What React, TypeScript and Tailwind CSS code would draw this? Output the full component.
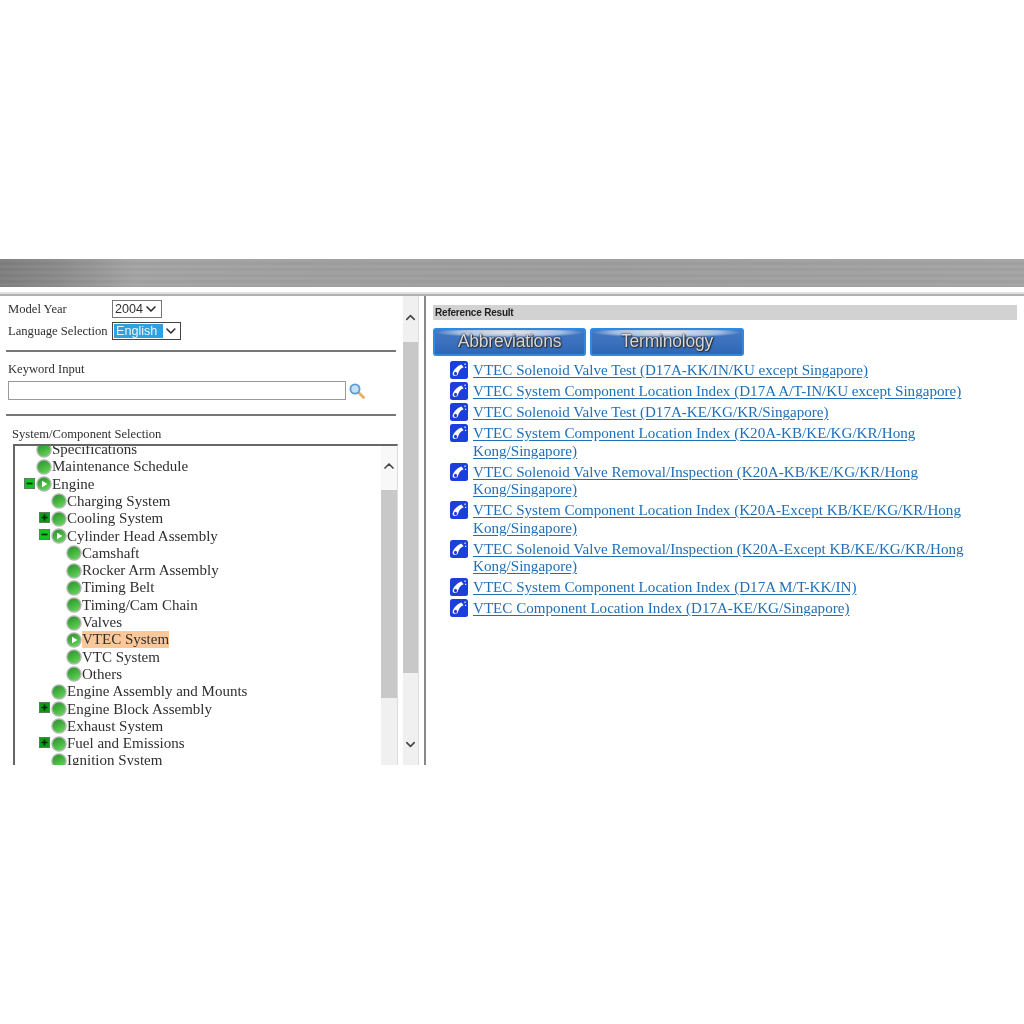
import { ChevronDown, ChevronUp } from "lucide-react";

type TreeRow = {
  label: string;
  level: number;
  toggle?: "plus" | "minus";
  open?: boolean;
  selected?: boolean;
};

const treeRows: TreeRow[] = [
  { label: "Specifications", level: 0 },
  { label: "Maintenance Schedule", level: 0 },
  { label: "Engine", level: 0, toggle: "minus", open: true },
  { label: "Charging System", level: 1 },
  { label: "Cooling System", level: 1, toggle: "plus" },
  { label: "Cylinder Head Assembly", level: 1, toggle: "minus", open: true },
  { label: "Camshaft", level: 2 },
  { label: "Rocker Arm Assembly", level: 2 },
  { label: "Timing Belt", level: 2 },
  { label: "Timing/Cam Chain", level: 2 },
  { label: "Valves", level: 2 },
  { label: "VTEC System", level: 2, open: true, selected: true },
  { label: "VTC System", level: 2 },
  { label: "Others", level: 2 },
  { label: "Engine Assembly and Mounts", level: 1 },
  { label: "Engine Block Assembly", level: 1, toggle: "plus" },
  { label: "Exhaust System", level: 1 },
  { label: "Fuel and Emissions", level: 1, toggle: "plus" },
  { label: "Ignition System", level: 1 },
];

const links: string[][] = [
  ["VTEC Solenoid Valve Test (D17A-KK/IN/KU except Singapore)"],
  ["VTEC System Component Location Index (D17A A/T-IN/KU except Singapore)"],
  ["VTEC Solenoid Valve Test (D17A-KE/KG/KR/Singapore)"],
  ["VTEC System Component Location Index (K20A-KB/KE/KG/KR/Hong", "Kong/Singapore)"],
  ["VTEC Solenoid Valve Removal/Inspection (K20A-KB/KE/KG/KR/Hong", "Kong/Singapore)"],
  ["VTEC System Component Location Index (K20A-Except KB/KE/KG/KR/Hong", "Kong/Singapore)"],
  ["VTEC Solenoid Valve Removal/Inspection (K20A-Except KB/KE/KG/KR/Hong", "Kong/Singapore)"],
  ["VTEC System Component Location Index (D17A M/T-KK/IN)"],
  ["VTEC Component Location Index (D17A-KE/KG/Singapore)"],
];

const levelPadding = ["pl-[21px]", "pl-[36px]", "pl-[51px]"];

function Ball({ open }: { open?: boolean }) {
  return (
    <svg viewBox="0 0 16 16" className="h-[16px] w-[16px] shrink-0">
      <defs>
        <linearGradient id="ballFill" x1="0.2" y1="0" x2="0.7" y2="1">
          <stop offset="0" stopColor="#2f8f30" />
          <stop offset="0.55" stopColor="#48b842" />
          <stop offset="1" stopColor="#6ad662" />
        </linearGradient>
      </defs>
      <circle cx="8" cy="8" r="7.1" fill="url(#ballFill)" stroke="#b4b8b4" strokeWidth="1.3" />
      {open && <path d="M6 4.8 L11.4 8 L6 11.2 Z" fill="#fff" />}
    </svg>
  );
}

function Toggle({ kind }: { kind: "plus" | "minus" }) {
  return (
    <svg viewBox="0 0 11 11" className="h-[11px] w-[11px] shrink-0">
      <rect x="0.4" y="0.4" width="10.2" height="10.2" fill={kind === "plus" ? "#0a9a14" : "#14c41e"} stroke="#557055" strokeWidth="0.8" />
      <path d={kind === "plus" ? "M2.5 5.5 H8.5 M5.5 2.5 V8.5" : "M2.5 5.5 H8.5"} stroke="#04280a" strokeWidth="1.7" />
    </svg>
  );
}

function DocIcon() {
  return (
    <svg viewBox="0 0 18 18" className="mt-[-1px] mr-[5px] h-[18px] w-[18px] shrink-0">
      <rect width="18" height="18" rx="2.5" fill="#1c3fdc" />
      <path d="M2.6 13 C3 9 7 5 11.4 3.4 L13.6 6.2 C10.6 7.4 8.8 9.6 8.2 12.2 C8 15 3.4 16.4 2.6 13 Z" fill="#fff" />
      <ellipse cx="5.5" cy="12.6" rx="1.5" ry="1.9" fill="#1c3fdc" />
      <path d="M14.4 3.4 L15.8 3 M15 6.4 L16.2 6.4" stroke="#fff" strokeWidth="1.2" />
    </svg>
  );
}

function SearchIcon() {
  return (
    <svg viewBox="0 0 16 16" className="ml-[3px] h-[16px] w-[16px]">
      <path d="M9.6 9.6 L14.6 14.4" stroke="#e8b060" strokeWidth="2.8" strokeLinecap="round" />
      <circle cx="6" cy="6" r="4.6" fill="#c4e0f6" stroke="#5a9ad4" strokeWidth="1.8" />
    </svg>
  );
}

function ActionButton({ label, width }: { label: string; width: string }) {
  return (
    <div
      className={`${width} flex h-[28px] items-center justify-center rounded-[3px] border-2 border-[#2c8ae2] bg-[radial-gradient(ellipse_50%_22%_at_50%_10%,#e4e8f0_0%,#a8bede_70%,transparent_100%),linear-gradient(to_bottom,#4278c4_0%,#3a70bc_55%,#2c68b8_100%)] pb-[2px] font-['Liberation_Sans',sans-serif] text-[17.5px] tracking-[-0.2px] text-[#d8d8d8] [text-shadow:0_0_2px_#222,0_0_1px_#222,1px_1px_1px_#333]`}
    >
      {label}
    </div>
  );
}

export default function App() {
  return (
    <div className="h-[1024px] w-[1024px] overflow-hidden bg-white font-['Liberation_Serif',serif] text-[#2f2f2f] blur-[0.45px]">
      <div className="h-[259px]" />
      <div className="h-[28px] bg-[repeating-linear-gradient(to_bottom,rgba(255,255,255,0.025)_0px,rgba(255,255,255,0.025)_3px,rgba(0,0,0,0.025)_3px,rgba(0,0,0,0.025)_6px),linear-gradient(to_right,#7e7e7e_0%,#8c8c8c_6%,#a4a4a4_13%,#a0a0a0_30%,#9e9e9e_60%,#a4a4a4_100%)]" />
      <div className="h-[9px] pt-[5px]">
        <div className="h-[4px] border-b-2 border-[#b0b0b0] bg-[#e2e2e2]" />
      </div>

      <div className="flex h-[469px]">
        {/* left pane */}
        <div className="w-[403px] shrink-0 pt-[4px] text-[12.6px]">
          <div className="flex h-[18px] items-center pl-[8px]">
            <span className="w-[104px]">Model Year</span>
            <div className="flex h-[18px] w-[50px] items-center justify-between border border-[#777] pr-[2px] pl-[2px] font-['Liberation_Sans',sans-serif] text-[12.6px]">
              2004
              <ChevronDown size={16} strokeWidth={2.5} />
            </div>
          </div>
          <div className="mt-[4px] flex h-[18px] items-center pl-[8px]">
            <span className="w-[104px]">Language Selection</span>
            <div className="flex h-[18px] w-[69px] items-center justify-between border border-[#444] p-[1px] pr-[1px] font-['Liberation_Sans',sans-serif] text-[12.6px]">
              <span className="h-full w-[50px] bg-[#2ea2e0] pl-[2px] leading-[14px] text-[#e8f4fc]">English</span>
              <ChevronDown size={16} strokeWidth={2.5} />
            </div>
          </div>

          <div className="mt-[10px] ml-[6px] h-[2px] w-[390px] bg-[#777]" />

          <div className="mt-[10px] pl-[8px] leading-[14px]">Keyword Input</div>
          <div className="mt-[5px] flex items-center pl-[8px]">
            <div className="h-[19px] w-[338px] border border-[#999] bg-white" />
            <SearchIcon />
          </div>

          <div className="mt-[14px] ml-[6px] h-[2px] w-[390px] bg-[#777]" />

          <div className="mt-[11px] pl-[12px] leading-[14px]">System/Component Selection</div>

          {/* tree box, runs off the bottom of the pane */}
          <div className="mt-[3px] ml-[13px] flex h-[321px] w-[385px] overflow-hidden border-t-2 border-r border-l-2 border-t-[#666] border-r-[#ddd] border-l-[#666]">
            <div className="min-w-0 flex-1 overflow-hidden text-[15px]">
              <div className="mt-[-5.1px]">
                {treeRows.map((row) => (
                  <div key={row.label} className={`relative flex h-[17.3px] items-center ${levelPadding[row.level]}`}>
                    {row.toggle && (
                      <span className="absolute top-[2px] ml-[-12px]">
                        <Toggle kind={row.toggle} />
                      </span>
                    )}
                    <Ball open={row.open} />
                    <span className={`leading-[17px] ${row.selected ? "bg-[#fcc89a]" : ""}`}>{row.label}</span>
                  </div>
                ))}
              </div>
            </div>
            <div className="w-[16px] shrink-0 bg-[#f0f0f0]">
              <div className="flex h-[44px] items-start justify-center bg-[#f8f8f8] pt-[12px] text-[#444]">
                <ChevronUp size={16} strokeWidth={2.5} />
              </div>
              <div className="h-[208px] bg-[#c8c8c8]" />
            </div>
          </div>
        </div>

        {/* outer scrollbar */}
        <div className="flex w-[15px] shrink-0 flex-col bg-[#f0f0f0] text-[#444]">
          <div className="flex h-[46px] items-start justify-center pt-[13px]">
            <ChevronUp size={17} strokeWidth={2.5} />
          </div>
          <div className="h-[331px] bg-[#c8c8c8]" />
          <div className="flex flex-1 items-end justify-center pb-[12px]">
            <ChevronDown size={17} strokeWidth={2.5} />
          </div>
        </div>
        <div className="w-[6px] shrink-0 border-l border-[#ddd]" />

        {/* right pane */}
        <div className="flex-1 border-l-2 border-[#888] pt-[9px] pr-[7px] pl-[7px]">
          <div className="flex h-[15px] items-center bg-[#d2d2d2] pl-[2px] font-['Liberation_Sans',sans-serif] text-[10px] font-bold tracking-[-0.2px] text-[#222]">
            Reference Result
          </div>
          <div className="mt-[8px] flex gap-[4px]">
            <ActionButton label="Abbreviations" width="w-[153px]" />
            <ActionButton label="Terminology" width="w-[154px]" />
          </div>
          <div className="mt-[6px] flex flex-col gap-[3.5px] pl-[17px] text-[15.1px] leading-[17.5px] text-[#1f6fb8]">
            {links.map((lines) => (
              <div key={lines[0]} className="flex items-start">
                <DocIcon />
                <a className="underline underline-offset-2">
                  {lines[0]}
                  {lines[1] && <br />}
                  {lines[1]}
                </a>
              </div>
            ))}
          </div>
        </div>
      </div>
    </div>
  );
}
